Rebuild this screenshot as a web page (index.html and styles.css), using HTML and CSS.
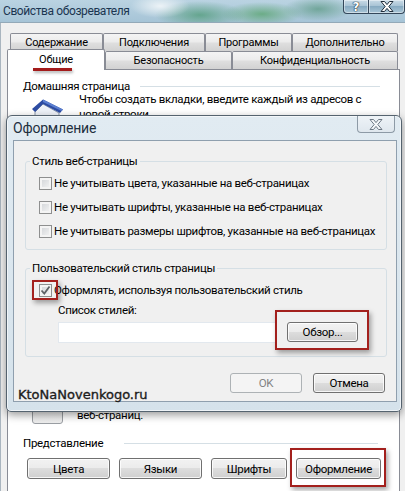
FILE: index.html
```html
<!DOCTYPE html>
<html lang="ru">
<head>
<meta charset="utf-8">
<title>Свойства обозревателя</title>
<link rel="stylesheet" href="styles.css">
</head>
<body>
<div class="window">
  <header class="titlebar">
    <span class="title">Свойства обозревателя</span>
    <div class="caption">
      <span class="cap-btn cap-help">?</span>
      <span class="cap-btn cap-close"><svg width="14" height="11" viewBox="0 0 14 11"><path d="M1 0.5H4.5L7 3.6L9.5 0.5H13L8.8 5.5L13 10.5H9.5L7 7.4L4.5 10.5H1L5.2 5.5Z"/></svg></span>
    </div>
  </header>
  <div class="frame">
    <div class="tabs">
      <div class="tab-row row1">
        <span class="tab t-content">Содержание</span>
        <span class="tab t-conn">Подключения</span>
        <span class="tab t-prog">Программы</span>
        <span class="tab t-adv">Дополнительно</span>
      </div>
      <div class="tab-row row2">
        <span class="tab active t-general">Общие</span>
        <span class="tab t-sec">Безопасность</span>
        <span class="tab t-priv">Конфиденциальность</span>
      </div>
    </div>
    <div class="panel">
      <div class="sec-head head-home"><span>Домашняя страница</span><i class="rule"></i></div>
      <div class="home">
        <svg class="house" width="31" height="24" viewBox="0 0 31 24">
          <path d="M3 13L11 5L27 14V24H3Z" fill="#eef2f8" stroke="#8a97ab"/>
          <path d="M0 10L11 0.5L31 10.5L28 14L11 5L3 13Z" fill="#2d4ca3"/>
          <path d="M11 0.5L31 10.5L29.5 12L11 3Z" fill="#5b7fd0"/>
        </svg>
        <p class="home-text">Чтобы создать вкладки, введите каждый из адресов с<br>новой строки.</p>
      </div>
      <div class="covered"></div>
      <div class="tabs-sec">
        <span class="tabs-icon"></span>
        <p class="tabs-text">веб-страниц.</p>
      </div>
      <div class="sec-head head-view"><span>Представление</span><i class="rule"></i></div>
      <div class="btn-row">
        <span class="btn b-colors">Цвета</span>
        <span class="btn b-lang">Языки</span>
        <span class="btn b-fonts">Шрифты</span>
        <span class="btn b-access mark">Оформление</span>
      </div>
    </div>
  </div>

  <div class="dialog">
    <div class="dlg-title">
      <span class="dlg-caption">Оформление</span>
      <span class="dlg-close"><svg width="14" height="11" viewBox="0 0 14 11"><path d="M1 0.5H4.5L7 3.6L9.5 0.5H13L8.8 5.5L13 10.5H9.5L7 7.4L4.5 10.5H1L5.2 5.5Z"/></svg></span>
    </div>
    <div class="dlg-client">
      <fieldset class="group g1">
        <legend>Стиль веб-страницы</legend>
        <label class="check first"><span class="box"></span>Не учитывать цвета, указанные на веб-страницах</label>
        <label class="check"><span class="box"></span>Не учитывать шрифты, указанные на веб-страницах</label>
        <label class="check"><span class="box"></span>Не учитывать размеры шрифтов, указанные на веб-страницах</label>
      </fieldset>
      <fieldset class="group g2">
        <legend>Пользовательский стиль страницы</legend>
        <label class="check"><span class="box mark"><svg width="11" height="11" viewBox="0 0 11 11"><path d="M1.5 5.5L4.3 8.5L9.5 1.5" fill="none" stroke="#5e6266" stroke-width="1.8"/></svg></span>Оформлять, используя пользовательский стиль</label>
        <div class="list-label">Список стилей:</div>
        <div class="list-row">
          <span class="input"></span>
          <span class="btn browse mark">Обзор...</span>
        </div>
      </fieldset>
      <div class="dlg-buttons">
        <span class="btn disabled">OK</span>
        <span class="btn">Отмена</span>
      </div>
    </div>
    <div class="watermark">KtoNaNovenkogo.ru</div>
  </div>
</div>
</body>
</html>
```
FILE: styles.css
```css
* { box-sizing: border-box; }
html, body { margin: 0; padding: 0; }
body {
  width: 405px;
  height: 491px;
  overflow: hidden;
  background: #f0f0f0;
  font-family: Roboto, "Noto Sans", "Liberation Sans", sans-serif;
  font-size: 11.5px;
  letter-spacing: -0.3px;
  color: #000;
}
p { margin: 0; }

.window {
  position: relative;
  width: 405px;
  height: 491px;
  display: flex;
  flex-direction: column;
  overflow: hidden;
}

/* title bar */
.titlebar {
  flex: none;
  height: 23px;
  display: flex;
  justify-content: space-between;
  align-items: flex-start;
  border-bottom: 1px solid #93a9b8;
  background:
    radial-gradient(30px 12px at 160px 6px, rgba(255,255,255,.75), rgba(255,255,255,0)),
    radial-gradient(45px 14px at 200px 15px, rgba(70,150,110,.7), rgba(70,150,110,0)),
    radial-gradient(40px 12px at 262px 14px, rgba(80,160,100,.7), rgba(80,160,100,0)),
    radial-gradient(35px 12px at 318px 9px, rgba(70,140,110,.6), rgba(70,140,110,0)),
    linear-gradient(#bad3e2, #a6c4d7);
}
.title {
  font-size: 12px;
  letter-spacing: -0.4px;
  line-height: 16px;
  padding: 3px 0 0 3px;
  color: #1b3550;
}
.caption { display: flex; }
.cap-btn {
  height: 14px;
  display: flex;
  align-items: center;
  justify-content: center;
  border: 1px solid #34475a;
  border-top: 0;
  background: linear-gradient(#c9dbe7, #a5c1d3 50%, #88abc2 50%, #a9c6d7);
  box-shadow: inset 0 0 0 1px rgba(255,255,255,.45);
}
.cap-help {
  width: 26px;
  border-radius: 0 0 0 4px;
  font-family: "DejaVu Sans", sans-serif;
  font-weight: bold;
  font-size: 12px;
  letter-spacing: 0;
  line-height: 12px;
  color: #fff;
  text-shadow: 0 0 1px #1f2d3b, 0 0 1px #1f2d3b, 0 0 1px #1f2d3b;
}
.cap-close {
  width: 36px;
  border-left: 0;
  border-radius: 0 0 4px 0;
}
.cap-close svg path { fill: #fff; stroke: #1f2d3b; stroke-width: 1; }

/* window body */
.frame {
  flex: 1;
  min-height: 0;
  display: flex;
  flex-direction: column;
  border-left: 1px solid #a9b5bf;
}
.tabs { padding-top: 10px; }
.tab-row { display: flex; height: 18px; }
.row1 { padding-left: 9px; }
.row2 { padding-left: 6px; align-items: flex-end; }
.tab {
  height: 18px;
  display: flex;
  align-items: center;
  justify-content: center;
  border: 1px solid #898c95;
  border-bottom: 0;
  border-radius: 2px 2px 0 0;
  background: linear-gradient(#f4f4f4, #ececec 45%, #dedede 55%, #d2d2d2);
  font-size: 11px;
  letter-spacing: -0.2px;
  line-height: 14px;
  white-space: nowrap;
}
.t-content { width: 93px; }
.t-conn { width: 102px; }
.t-prog { width: 87px; }
.t-adv { width: 106px; }
.t-general { width: 98px; }
.t-sec { width: 127px; }
.t-priv { width: 166px; }
.tab.active {
  position: relative;
  z-index: 2;
  height: 21px;
  margin-bottom: -1px;
  background: #fff;
  padding-bottom: 1px;
}
.tab.active::after {
  content: "";
  position: absolute;
  left: 25px;
  top: 18px;
  width: 39px;
  height: 3px;
  background: #a31b1b;
  box-shadow: 1px 2px 3px rgba(0,0,0,.3);
}

.panel {
  flex: none;
  margin-left: 6px;
  width: 393px;
  border: 1px solid #898c95;
  background: #fff;
  padding: 10px 0 20px 15px;
}
.sec-head { display: flex; align-items: center; }
.sec-head .rule { flex: 1; height: 1px; background: #d5dfe5; }
.head-home { line-height: 12px; }
.head-home .rule { margin: 0 19px 0 10px; }
.head-view { line-height: 14px; margin-top: 12px; }
.head-view .rule { margin: 0 21px 0 21px; }

.home { display: flex; }
.house { flex: none; margin: 7px 0 0 9px; }
.home-text { margin-left: 16px; line-height: 15px; }
.covered { height: 271px; }

.tabs-sec { display: flex; }
.tabs-icon {
  flex: none;
  width: 31px;
  height: 28px;
  margin: 2px 0 0 9px;
  border: 1px solid #9a9ea3;
  border-radius: 3px;
  background: linear-gradient(#fafafa, #ececec);
}
.tabs-text { margin: 14px 0 0 14px; line-height: 14px; }

.btn-row { display: flex; gap: 9px; margin: 8px 0 0 4px; }
.btn {
  position: relative;
  display: flex;
  align-items: center;
  justify-content: center;
  height: 21px;
  border: 1px solid #707070;
  border-radius: 3px;
  background: linear-gradient(#f2f2f2, #ebebeb 50%, #dddddd 50%, #cfcfcf);
  box-shadow: inset 0 0 0 1px rgba(255,255,255,.8);
  white-space: nowrap;
}
.b-colors { width: 83px; }
.b-lang { width: 83px; }
.b-fonts { width: 76px; }
.b-access { width: 85px; }
.btn.disabled {
  border-color: #adb2b5;
  background: #f4f4f4;
  color: #838383;
  box-shadow: none;
}

/* red annotation frames */
.mark::after {
  content: "";
  position: absolute;
  border: 2px solid #a3201d;
  box-shadow: 2px 3px 5px rgba(0,0,0,.35);
  pointer-events: none;
}
.b-access::after { left: -7px; right: -6px; top: -11px; bottom: -9px; }
.browse::after { left: -13px; right: -12px; top: -13px; bottom: -9px; }
.box.mark::after { left: -8px; right: -7px; top: -5px; bottom: -4px; }

/* dialog */
.dialog {
  position: absolute;
  left: 6px;
  top: 115px;
  width: 396px;
  height: 297px;
  z-index: 5;
  display: flex;
  flex-direction: column;
  border: 1px solid #55636f;
  border-radius: 6px 6px 5px 5px;
  padding: 0 4px 9px 6px;
  background: linear-gradient(#e1ebf2, #d5e2eb);
  box-shadow: 0 3px 8px rgba(0,0,0,.4), inset 0 0 0 1px rgba(255,255,255,.6);
}
.dlg-title {
  flex: none;
  height: 24px;
  display: flex;
  justify-content: space-between;
  align-items: flex-start;
}
.dlg-caption {
  font-size: 14px;
  letter-spacing: -0.2px;
  line-height: 24px;
  color: #1e2f40;
}
.dlg-close {
  width: 38px;
  height: 17px;
  margin-right: 2px;
  display: flex;
  align-items: center;
  justify-content: center;
  border: 1px solid #8d9aa6;
  border-top: 0;
  border-radius: 0 0 4px 4px;
  background: linear-gradient(#eef3f7, #dfe7ee);
}
.dlg-close svg path { fill: #f6f8fa; stroke: #6d7884; stroke-width: 1; }

.dlg-client {
  flex: 1;
  display: flex;
  flex-direction: column;
  border: 1px solid #8f9fae;
  background: #f0f0f0;
  padding: 0 9px 0 11px;
}
.group {
  margin: 0;
  min-width: 0;
  border: 1px solid #d5dfe5;
  border-radius: 3px;
  padding: 0 4px 6px 4px;
}
.group legend { padding: 0 2px; line-height: 15px; }
.g1 { margin-top: 13px; }
.g2 { margin-top: 11px; padding-bottom: 13px; }
.check {
  display: flex;
  align-items: center;
  height: 24px;
  margin-left: 9px;
  white-space: nowrap;
}
.check.first { margin-top: 2px; }
.g2 .check { height: 20px; margin-top: 4px; }
.box {
  flex: none;
  position: relative;
  width: 13px;
  height: 13px;
  margin-right: 2px;
  border: 1px solid #8e8f8f;
  background: linear-gradient(135deg, #cfd2d6, #f7f7f7);
  box-shadow: inset 0 0 0 2px #f4f4f4;
  display: flex;
  align-items: center;
  justify-content: center;
}
.list-label { line-height: 16px; margin: 2px 0 0 28px; }
.list-row { display: flex; align-items: flex-start; margin: 4px 0 0 28px; }
.input {
  width: 219px;
  height: 21px;
  background: #fff;
  border: 1px solid #e2e8ee;
}
.browse { width: 71px; height: 20px; margin-left: 10px; }
.dlg-buttons {
  display: flex;
  justify-content: flex-end;
  gap: 11px;
  margin-top: 16px;
  padding-right: 2px;
}
.dlg-buttons .btn { width: 72px; height: 20px; }

.watermark {
  position: absolute;
  left: 11px;
  top: 271px;
  font-family: "DejaVu Sans", sans-serif;
  font-size: 13px;
  letter-spacing: 0;
  line-height: 16px;
  color: #1c1c1c;
  -webkit-text-stroke: 0.35px #1c1c1c;
}
```
